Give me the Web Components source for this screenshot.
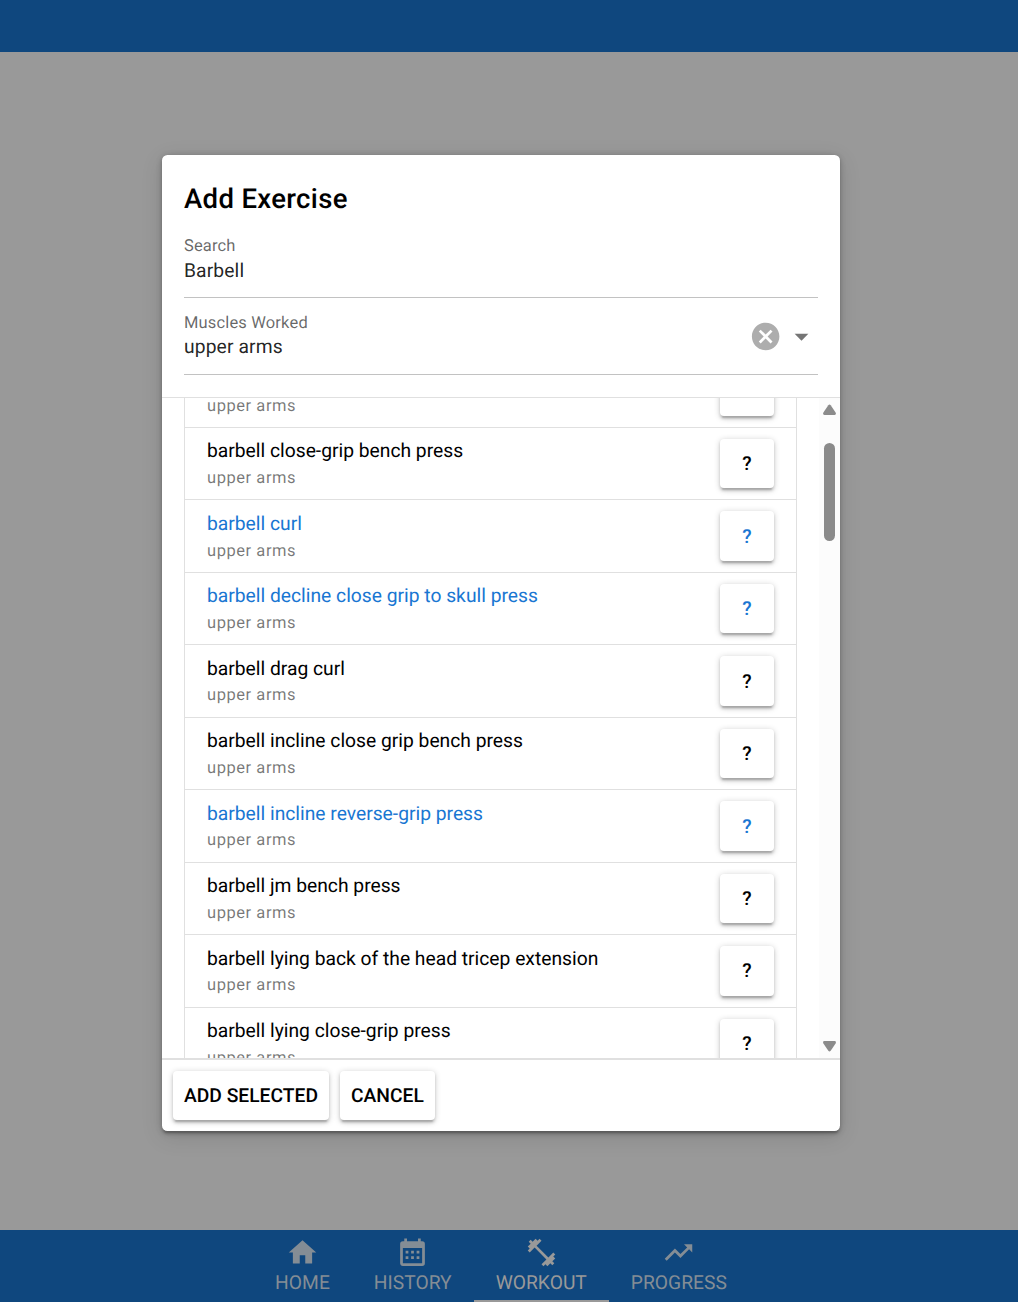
<!DOCTYPE html>
<html lang="en">
<head>
<meta charset="utf-8">
<title>Add Exercise</title>
<style>
  html, body { margin: 0; height: 100%; overflow: hidden; }
  body { font-family: Roboto, "Liberation Sans", sans-serif; font-size: 19.25px; color: #000; background: #999; text-rendering: geometricPrecision; }
</style>
</head>
<body>
<workout-app></workout-app>
<script>
const ICONS = {
  home: 'M10 20v-6h4v6h5v-8h3L12 3 2 12h3v8z',
  calendar: 'M9,10V12H7V10H9M13,10V12H11V10H13M17,10V12H15V10H17M19,3A2,2 0 0,1 21,5V19A2,2 0 0,1 19,21H5C3.89,21 3,20.1 3,19V5A2,2 0 0,1 5,3H6V1H8V3H16V1H18V3H19M19,19V8H5V19H19M9,14V16H7V14H9M13,14V16H11V14H13M17,14V16H15V14H17Z',
  dumbbell: 'M20.57,14.86L22,13.43L20.57,12L17,15.57L8.43,7L12,3.43L10.57,2L9.14,3.43L7.71,2L5.57,4.14L4.14,2.71L2.71,4.14L4.14,5.57L2,7.71L3.43,9.14L2,10.57L3.43,12L7,8.43L15.57,17L12,20.57L13.43,22L14.86,20.57L16.29,22L18.43,19.86L19.86,21.29L21.29,19.86L19.86,18.43L22,16.29L20.57,14.86Z',
  trending: 'M16 6l2.29 2.29-4.88 4.88-4-4L2 16.59 3.41 18l6-6 4 4 6.3-6.29L22 12V6z',
  cancel: 'M12 2C6.47 2 2 6.47 2 12s4.47 10 10 10 10-4.47 10-10S17.53 2 12 2zm5 13.59L15.59 17 12 13.41 8.41 17 7 15.59 10.59 12 7 8.41 8.41 7 12 10.59 15.59 7 17 8.41 13.41 12 17 15.59z',
  dropdown: 'M7 10l5 5 5-5z'
};

function define(name, render) {
  customElements.define(name, class extends HTMLElement {
    connectedCallback() {
      if (this.shadowRoot) return;
      this.attachShadow({ mode: 'open' }).innerHTML = render(this);
    }
  });
}

define('app-icon', el => `
  <style>:host { display: block; width: 33px; height: 33px; flex: none; } svg { display: block; width: 100%; height: 100%; fill: currentColor; }</style>
  <svg viewBox="${el.getAttribute('box') || '0 0 24 24'}"><path d="${ICONS[el.getAttribute('name')]}"/></svg>`);

define('app-button', () => `
  <style>
    :host { display: block; flex: none; }
    button { display: flex; align-items: center; justify-content: center; box-sizing: border-box; height: 49.5px;
      min-width: var(--button-width, 0); padding: var(--button-nudge, 0) 11px 0; border: 0; border-radius: 4px; background: #fff; color: inherit;
      font: 500 19.25px/33px Roboto, sans-serif; text-transform: uppercase; text-rendering: inherit;
      box-shadow: 0 1.375px 6.875px rgba(0,0,0,.2), 0 2.75px 2.75px rgba(0,0,0,.14), 0 4.125px 1.375px -2.75px rgba(0,0,0,.12); }
  </style>
  <button><slot></slot></button>`);

define('form-field', el => `
  <style>
    :host { display: flex; box-sizing: border-box; height: 77px; border-bottom: 1px solid #c2c2c2; }
    .text { flex: 1; padding-top: 15px; }
    .label { font-size: 16.5px; line-height: 22px; letter-spacing: .155px; color: rgba(0,0,0,.6); }
    .value { margin-top: var(--value-gap, 0px); font-size: 19.25px; line-height: 26px; letter-spacing: .12px; color: rgba(0,0,0,.87); }
    .icons { display: flex; align-items: center; gap: 2.75px; }
  </style>
  <div class="text"><div class="label">${el.getAttribute('label')}</div><div class="value">${el.getAttribute('value')}</div></div>
  <div class="icons"><slot></slot></div>`);

define('exercise-row', el => `
  <style>
    :host { display: flex; align-items: center; box-sizing: border-box; height: 72.485px; padding: 11px 22px; border-top: 1px solid #e0e0e0; }
    :host([selected]) { color: #1976d2; }
    .text { flex: 1; }
    .name { line-height: 23.1px; }
    .muscle { margin: 6.7px 0 -1.2px; font-size: 16.5px; line-height: 19.8px; letter-spacing: .55px; color: rgba(0,0,0,.54); }
    app-button { --button-width: 54px; --button-nudge: .33px; }
  </style>
  <div class="text"><div class="name"><slot></slot></div><div class="muscle">upper arms</div></div>
  <app-button>?</app-button>`);

define('scroll-track', () => `
  <style>
    :host { display: flex; flex-direction: column; align-items: center; width: 21px; background: #fcfcfc; flex: none; }
    svg { display: block; width: 13px; height: 11px; fill: #8b8b8b; flex: none; }
    .up { margin-top: 6px; }
    .thumb { width: 11px; height: 98px; margin-top: 28px; border-radius: 5.5px; background: #8b8b8b; }
    .down { margin: auto 0 6px; transform: rotate(180deg); }
  </style>
  <svg class="up" viewBox="0 0 13 11"><path d="M5.3 1.2Q6.5-.4 7.7 1.2L12.6 8.6Q13.6 10.8 11.6 11H1.4Q-.6 10.8.4 8.6Z"/></svg>
  <div class="thumb"></div>
  <svg class="down" viewBox="0 0 13 11"><path d="M5.3 1.2Q6.5-.4 7.7 1.2L12.6 8.6Q13.6 10.8 11.6 11H1.4Q-.6 10.8.4 8.6Z"/></svg>`);

define('exercise-dialog', () => `
  <style>
    :host { display: flex; flex-direction: column; width: 678px; height: 976px; border-radius: 5.5px; background: #fff; overflow: hidden;
      box-shadow: 0 1.375px 6.875px rgba(0,0,0,.2), 0 2.75px 2.75px rgba(0,0,0,.14), 0 4.125px 1.375px -2.75px rgba(0,0,0,.12), 0 5.5px 22px rgba(0,0,0,.12); }
    header { box-sizing: border-box; height: 243px; padding: 22px 22px 0; border-bottom: 1px solid #e0e0e0; flex: none; }
    h2 { margin: 0; font-size: 27.5px; line-height: 44px; font-weight: 500; letter-spacing: .344px; }
    .viewport { display: flex; flex: 1; min-height: 0; overflow: hidden; }
    .list { flex: 1; align-self: flex-start; margin: -43.8px 22px 0; border: 1px solid #e0e0e0; border-top: 0; }
    footer { display: flex; align-items: flex-start; gap: 11px; box-sizing: border-box; height: 73px; padding: 10.75px 11px 0; border-top: 2px solid #e0e0e0; flex: none; }
  </style>
  <header>
    <h2>Add Exercise</h2>
    <form-field label="Search" value="Barbell"></form-field>
    <form-field label="Muscles Worked" value="upper arms" style="--value-gap:-1px">
      <app-icon name="cancel" box="-.1 0 24 24" style="color:#adadad"></app-icon><app-icon name="dropdown" style="color:#757575"></app-icon>
    </form-field>
  </header>
  <div class="viewport">
    <div class="list"><slot></slot></div>
    <scroll-track></scroll-track>
  </div>
  <footer><app-button>Add Selected</app-button><app-button>Cancel</app-button></footer>`);

define('nav-tab', el => `
  <style>
    :host { display: flex; flex-direction: column; align-items: center; box-sizing: border-box; height: 72px; padding: 6px 22px 0; color: #848d95; border-bottom: 2px solid transparent; }
    :host([active]) { color: #999; border-bottom-color: #999; }
    span { line-height: 28px; text-transform: uppercase; }
    [name=calendar] { margin: 1px 0 -1px; }
  </style>
  <app-icon name="${el.getAttribute('icon')}"></app-icon><span><slot></slot></span>`);

define('workout-app', () => `
  <style>
    :host { display: flex; flex-direction: column; height: 100vh; }
    .bar { height: 52px; background: #0f477e; flex: none; }
    main { display: flex; flex: 1; padding: 103px 0 0 162px; align-items: flex-start; }
    nav { display: flex; justify-content: center; box-sizing: border-box; height: 72px; padding-right: 16px; background: #0f477e; flex: none; }
  </style>
  <div class="bar"></div>
  <main>
    <exercise-dialog>
      <exercise-row>barbell bench press</exercise-row>
      <exercise-row>barbell close-grip bench press</exercise-row>
      <exercise-row selected>barbell curl</exercise-row>
      <exercise-row selected>barbell decline close grip to skull press</exercise-row>
      <exercise-row>barbell drag curl</exercise-row>
      <exercise-row>barbell incline close grip bench press</exercise-row>
      <exercise-row selected>barbell incline reverse-grip press</exercise-row>
      <exercise-row>barbell jm bench press</exercise-row>
      <exercise-row>barbell lying back of the head tricep extension</exercise-row>
      <exercise-row>barbell lying close-grip press</exercise-row>
    </exercise-dialog>
  </main>
  <nav>
    <nav-tab icon="home">Home</nav-tab>
    <nav-tab icon="calendar">History</nav-tab>
    <nav-tab icon="dumbbell" active>Workout</nav-tab>
    <nav-tab icon="trending">Progress</nav-tab>
  </nav>`);
</script>
</body>
</html>
